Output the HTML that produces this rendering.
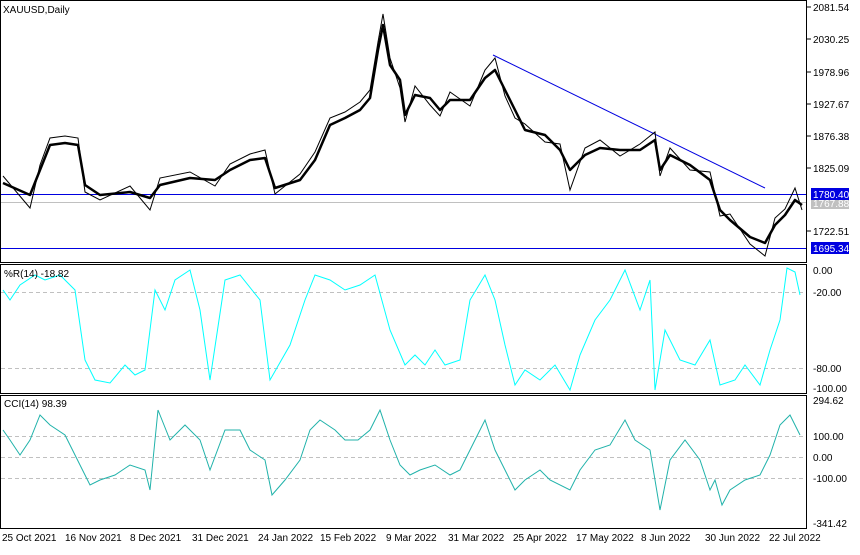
<!DOCTYPE html><html><head><meta charset="utf-8"><style>
body{margin:0;background:#fff;width:860px;height:550px;overflow:hidden;font-family:"Liberation Sans",sans-serif}
svg text{font-family:"Liberation Sans",sans-serif;font-size:10px}
</style></head><body>
<svg width="860" height="550" xmlns="http://www.w3.org/2000/svg">
<rect width="860" height="550" fill="#fff"/>
<g stroke="#c0c0c0" stroke-dasharray="4,3" stroke-width="1">
<line x1="1" y1="292.5" x2="807" y2="292.5"/><line x1="1" y1="368.5" x2="807" y2="368.5"/>
<line x1="1" y1="436.5" x2="807" y2="436.5"/><line x1="1" y1="457.5" x2="807" y2="457.5"/><line x1="1" y1="478.5" x2="807" y2="478.5"/>
</g>
<line x1="1" y1="202.5" x2="807" y2="202.5" stroke="#c0c0c0"/>
<line x1="1" y1="194.5" x2="807" y2="194.5" stroke="#0000e0"/>
<line x1="1" y1="248.5" x2="807" y2="248.5" stroke="#0000e0"/>
<line x1="493" y1="55" x2="765" y2="188" stroke="#0000e0"/>
<polyline fill="none" stroke="#000" stroke-width="2.5" stroke-linejoin="round" points="3,183 30,195 40,170 50,145 65,143 78,145 85,185 100,195 130,192 150,198 160,185 190,178 215,180 230,170 250,160 265,158 275,188 300,180 315,160 330,125 345,118 360,110 370,98 378,50 383,25 390,65 400,80 405,115 415,95 430,98 440,110 450,100 470,100 485,78 495,70 505,90 515,110 525,130 545,135 560,150 570,170 585,155 600,148 620,150 640,150 655,140 660,170 670,155 690,165 710,180 720,210 730,220 750,237 765,243 775,225 785,215 795,200 802,205"/>
<polyline fill="none" stroke="#000" stroke-width="1" points="3,176 30,208 40,165 50,138 65,136 78,138 85,192 100,200 130,186 150,210 160,178 190,172 215,186 230,164 250,154 265,150 275,194 300,174 315,152 330,118 345,112 360,102 370,90 378,42 383,14 390,58 400,88 405,122 415,86 430,105 440,116 450,92 470,106 485,70 495,58 505,96 515,118 525,124 545,142 560,144 570,190 585,148 600,140 620,156 640,144 655,132 660,176 670,148 690,170 710,172 720,216 730,214 750,244 765,256 775,218 785,209 795,188 802,210"/>
<polyline fill="none" stroke="#00ffff" stroke-width="1" points="3,290 10,300 20,285 35,275 45,280 60,275 75,290 85,360 95,380 110,383 125,365 135,375 145,370 155,290 165,310 175,280 190,270 200,310 210,380 225,280 240,275 260,300 270,380 290,345 305,300 315,275 330,280 345,290 360,285 375,275 390,330 405,365 415,355 425,365 435,350 445,365 460,360 470,300 485,275 495,300 505,345 515,385 525,370 540,380 555,365 570,390 580,355 595,320 610,300 625,270 640,310 650,280 655,390 665,330 680,360 695,365 710,340 720,385 735,380 745,365 760,385 770,350 780,320 787,268 795,272 800,295"/>
<polyline fill="none" stroke="#20b2aa" stroke-width="1" points="3,430 10,440 20,455 30,440 40,415 50,425 65,435 80,465 90,485 100,480 115,475 130,465 145,470 150,490 158,410 170,440 185,425 200,440 210,470 225,430 240,430 250,450 265,460 272,495 285,480 300,460 310,430 320,420 335,430 345,440 358,440 370,430 380,410 390,440 400,465 410,475 420,470 435,465 450,475 460,470 475,440 485,420 495,450 505,470 515,490 525,480 540,470 550,480 570,490 580,470 595,450 610,445 625,420 635,440 650,450 660,510 670,460 685,440 700,460 710,490 715,480 722,505 730,490 745,480 760,475 770,455 780,425 790,415 800,435"/>
<g stroke="#000" fill="none" stroke-width="1">
<rect x="0.5" y="0.5" width="806" height="262"/>
<rect x="0.5" y="264.5" width="806" height="129"/>
<rect x="0.5" y="395.5" width="806" height="133"/>
</g>
<g stroke="#000">
<line x1="807" y1="7" x2="811" y2="7"/><line x1="807" y1="39" x2="811" y2="39"/><line x1="807" y1="72" x2="811" y2="72"/><line x1="807" y1="104" x2="811" y2="104"/><line x1="807" y1="136" x2="811" y2="136"/><line x1="807" y1="168" x2="811" y2="168"/><line x1="807" y1="231" x2="811" y2="231"/>
</g>
<g fill="#000">
<text x="3" y="13">XAUUSD,Daily</text>
<text x="4" y="277">%R(14) -18.82</text>
<text x="4" y="407">CCI(14) 98.39</text>
<text x="813" y="11">2081.54</text><text x="813" y="43">2030.25</text><text x="813" y="76">1978.96</text><text x="813" y="108">1927.67</text><text x="813" y="140">1876.38</text><text x="813" y="172">1825.09</text><text x="813" y="235">1722.51</text>
<text x="813" y="274">0.00</text><text x="813" y="296">-20.00</text><text x="813" y="372">-80.00</text><text x="813" y="392">-100.00</text>
<text x="813" y="404">294.62</text><text x="813" y="440">100.00</text><text x="813" y="461">0.00</text><text x="813" y="482">-100.00</text><text x="813" y="527">-341.42</text>
</g>
<rect x="811" y="197" width="38" height="12" fill="#c0c0c0"/><text x="813" y="207" fill="#fff">1767.88</text>
<rect x="811" y="188" width="38" height="12" fill="#0000e0"/><text x="813" y="198" fill="#fff">1780.40</text>
<rect x="811" y="242" width="38" height="12" fill="#0000e0"/><text x="813" y="252" fill="#fff">1695.34</text>
<g fill="#000">
<text x="2" y="541">25 Oct 2021</text><text x="65" y="541">16 Nov 2021</text><text x="130" y="541">8 Dec 2021</text><text x="192" y="541">31 Dec 2021</text><text x="258" y="541">24 Jan 2022</text><text x="320" y="541">15 Feb 2022</text><text x="386" y="541">9 Mar 2022</text><text x="448" y="541">31 Mar 2022</text><text x="513" y="541">25 Apr 2022</text><text x="576" y="541">17 May 2022</text><text x="641" y="541">8 Jun 2022</text><text x="705" y="541">30 Jun 2022</text><text x="769" y="541">22 Jul 2022</text>
</g>
</svg>
</body></html>
